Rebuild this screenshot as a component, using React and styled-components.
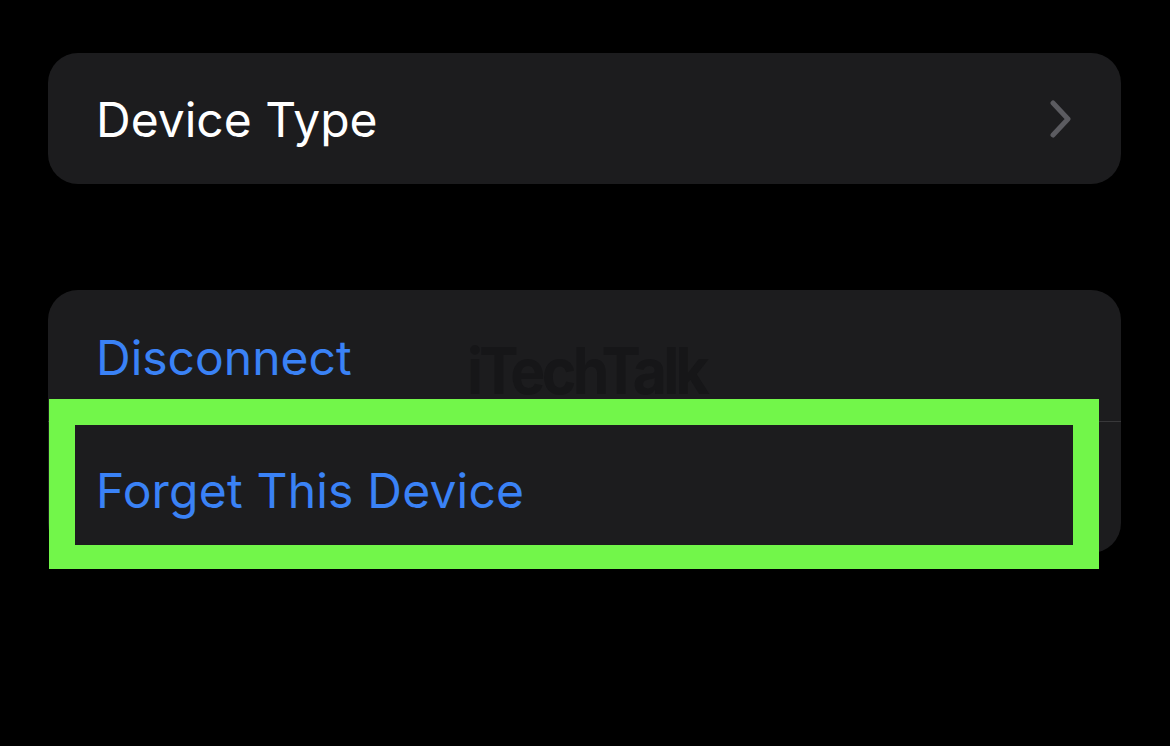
import React from "react";
import styled, { createGlobalStyle } from "styled-components";

const Global = createGlobalStyle`
  html, body { margin: 0; padding: 0; background: #000; }
  body { font-family: Inter, "Noto Sans", sans-serif; -webkit-font-smoothing: antialiased; }
`;

const Page = styled.div`
  width: 1170px;
  height: 746px;
  box-sizing: border-box;
  padding: 53px 49px 0 48px;
  display: flex;
  flex-direction: column;
  gap: 106px;
  background: #000;
`;

const Card = styled.div`
  position: relative;
  background: #1c1c1e;
  border-radius: 30px;
  display: flex;
  flex-direction: column;
`;

const Row = styled.div`
  height: 131px;
  box-sizing: border-box;
  padding: 0 49px 0 48px;
  display: flex;
  align-items: center;
  justify-content: space-between;
  position: relative;
  & + & {
    border-top: 1px solid #38383a;
    height: 132px;
  }
`;

const Label = styled.span`
  font-size: 48px;
  font-weight: 400;
  letter-spacing: ${(p) => p.$ls || 0}px;
  color: ${(p) => (p.$action ? "#3a82f6" : "#ffffff")};
  line-height: 1;
  position: relative;
  top: ${(p) => p.$dy || 0}px;
`;

const Watermark = styled.div`
  position: absolute;
  left: 419px;
  top: 49px;
  font-family: Inter, sans-serif;
  font-weight: 700;
  font-size: 64px;
  letter-spacing: -4px;
  color: #161618;
  line-height: 1;
  transform: scaleX(0.92);
  transform-origin: left top;
  pointer-events: none;
`;

const Highlight = styled.div`
  position: absolute;
  left: 1px;
  top: 109px;
  width: 1050px;
  height: 170px;
  box-sizing: border-box;
  border: 26px solid #72f64a;
  border-bottom-width: 24px;
  pointer-events: none;
`;

const Chevron = () => (
  <svg width="22" height="38" viewBox="0 0 22 38">
    <polyline
      points="3,3 18,19 3,35"
      fill="none"
      stroke="#5b5b60"
      strokeWidth="5"
      strokeLinecap="round"
      strokeLinejoin="round"
    />
  </svg>
);

export default function App() {
  return (
    <>
      <Global />
      <Page>
        <Card>
          <Row>
            <Label $dy={1}>Device Type</Label>
            <Chevron />
          </Row>
        </Card>
        <Card>
          <Watermark>iTechTalk</Watermark>
          <Row>
            <Label $action $dy={2}>Disconnect</Label>
          </Row>
          <Row>
            <Label $action $dy={3} $ls={0.2}>Forget This Device</Label>
          </Row>
          <Highlight />
        </Card>
      </Page>
    </>
  );
}
